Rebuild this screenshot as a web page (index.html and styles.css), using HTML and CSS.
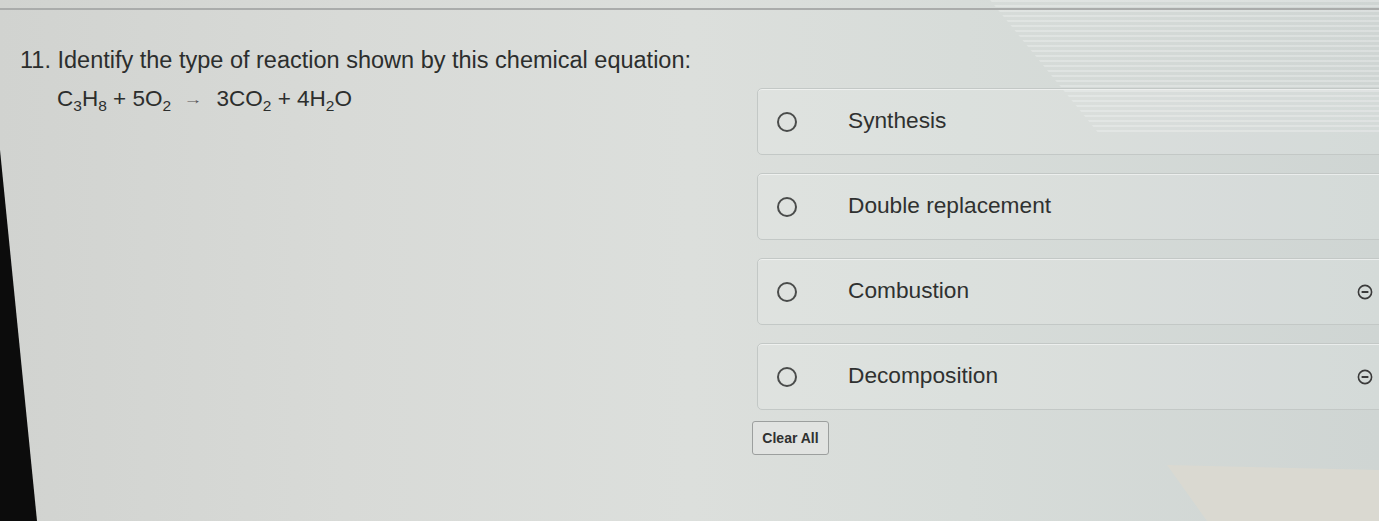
FILE: index.html
```html
<!DOCTYPE html>
<html lang="en">
<head>
<meta charset="utf-8">
<title>Question 11</title>
<link rel="stylesheet" href="styles.css">
</head>
<body>
<div class="screen">
  <div class="glare"></div>
  <div class="topline"></div>
  <div class="question">
    <h2 class="prompt"><span class="num">11.</span> Identify the type of reaction shown by this chemical equation:</h2>
    <div class="body">
      <div class="equation">C<sub>3</sub>H<sub>8</sub> + 5O<sub>2</sub> <span class="arrow">→</span> 3CO<sub>2</sub> + 4H<sub>2</sub>O</div>
      <div class="answers">
        <label class="option">
          <span class="radio"></span>
          <span class="label">Synthesis</span>
        </label>
        <label class="option">
          <span class="radio"></span>
          <span class="label">Double replacement</span>
        </label>
        <label class="option">
          <span class="radio"></span>
          <span class="label">Combustion</span>
          <svg class="elim" viewBox="0 0 16 16" width="16" height="16"><circle cx="8" cy="8" r="6.6" fill="none" stroke="#3a3a3a" stroke-width="1.6"/><line x1="4.6" y1="8" x2="11.4" y2="8" stroke="#3a3a3a" stroke-width="2"/></svg>
        </label>
        <label class="option">
          <span class="radio"></span>
          <span class="label">Decomposition</span>
          <svg class="elim" viewBox="0 0 16 16" width="16" height="16"><circle cx="8" cy="8" r="6.6" fill="none" stroke="#3a3a3a" stroke-width="1.6"/><line x1="4.6" y1="8" x2="11.4" y2="8" stroke="#3a3a3a" stroke-width="2"/></svg>
        </label>
        <div class="actions">
          <button class="clear" type="button">Clear All</button>
        </div>
      </div>
    </div>
  </div>
  <div class="bezel"></div>
  <div class="paper"></div>
</div>
</body>
</html>
```

FILE: styles.css
```css
html, body {
  margin: 0;
  padding: 0;
  width: 1379px;
  height: 521px;
  overflow: hidden;
}

body {
  font-family: "Liberation Sans", Arial, sans-serif;
  color: #2f3130;
  background: linear-gradient(90deg, #d1d3d0 0%, #d8dad7 25%, #dcdfdc 50%, #d7dcd9 70%, #cfd5d3 100%);
}

.screen {
  position: relative;
  width: 1379px;
  height: 521px;
}

.topline {
  position: relative;
  height: 8px;
  border-bottom: 2px solid #aaacab;
}

.question {
  position: relative;
  padding: 37px 0 0 20px;
}

.prompt {
  margin: 0;
  font-size: 23.5px;
  font-weight: normal;
  line-height: 26px;
  color: #2c2e2d;
}

.body {
  display: flex;
  align-items: flex-start;
}

.equation {
  width: 700px;
  flex: none;
  padding: 13px 0 0 37px;
  font-size: 22.5px;
  line-height: 26px;
  color: #2c2e2d;
}

.equation sub {
  font-size: 15.5px;
  vertical-align: -5px;
  line-height: 0;
}

.arrow {
  display: inline-block;
  font-size: 19px;
  margin: 0 8px 0 6px;
  color: #555;
  transform: scaleY(0.7);
}

.answers {
  margin-top: 15px;
  display: flex;
  flex-direction: column;
  gap: 18px;
  flex: none;
  width: 630px;
}

.option {
  display: flex;
  align-items: center;
  height: 67px;
  box-sizing: border-box;
  border: 1px solid #c3c8c6;
  border-radius: 5px;
  background: rgba(255, 255, 255, 0.12);
  box-shadow: 0 1px 0 rgba(255,255,255,0.5) inset;
  padding: 0 13px 0 19px;
}

.radio {
  width: 16px;
  height: 16px;
  border: 2px solid #4a4c4b;
  border-radius: 50%;
  flex: none;
}

.label {
  margin-left: 51px;
  padding-bottom: 3px;
  font-size: 22.7px;
  color: #2f3130;
  flex: 1;
}

.elim {
  flex: none;
}

.actions {
  margin-top: -7px;
}

.clear {
  font-family: "Liberation Sans", Arial, sans-serif;
  font-size: 14px;
  font-weight: bold;
  color: #2f3130;
  background: #e1e3e1;
  border: 1px solid #9c9f9e;
  border-radius: 3px;
  height: 34px;
  width: 77px;
  padding: 0;
  margin-left: -5px;
}

.glare {
  position: absolute;
  left: 990px;
  top: 0;
  width: 389px;
  height: 135px;
  background: repeating-linear-gradient(180deg, rgba(255,255,255,0.45) 0 2px, rgba(255,255,255,0) 2px 5px);
  clip-path: polygon(0 0, 100% 0, 100% 100%, 110px 100%);
  opacity: 0.55;
}

.bezel {
  position: absolute;
  left: 0;
  top: 0;
  width: 40px;
  height: 521px;
  background: #0c0c0c;
  clip-path: polygon(0 150px, 0 521px, 37px 521px);
}

.paper {
  position: absolute;
  right: 0;
  bottom: 0;
  width: 212px;
  height: 56px;
  background: #dad9d1;
  clip-path: polygon(0 0, 100% 5px, 100% 100%, 40px 100%);
}
```
